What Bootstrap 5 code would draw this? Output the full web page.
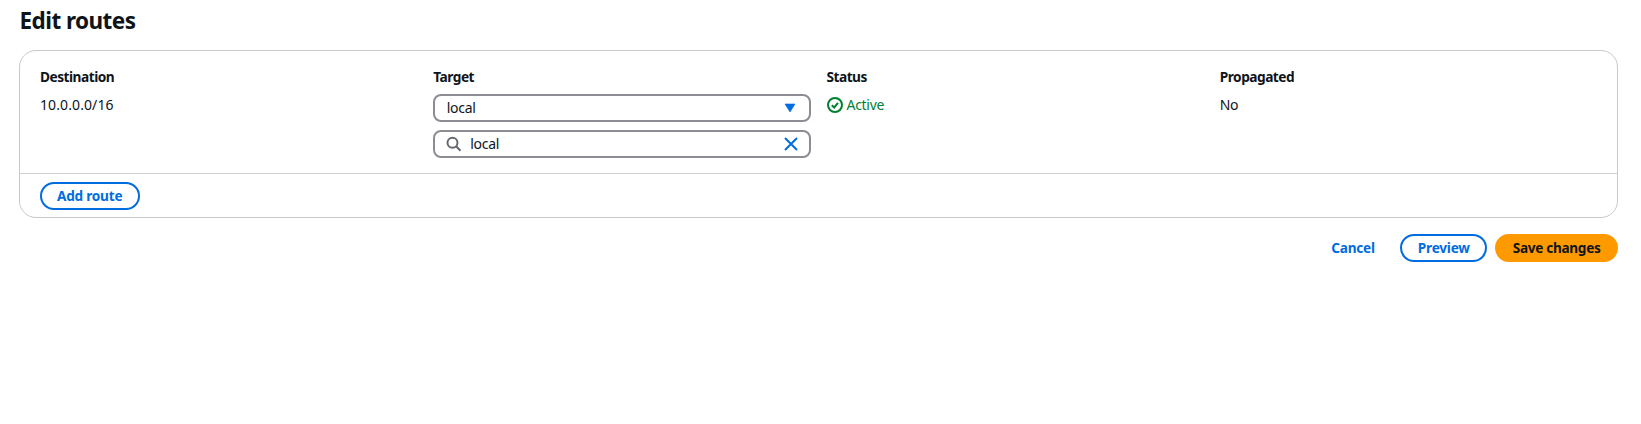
<!DOCTYPE html>
<html lang="en">
<head>
<meta charset="utf-8">
<meta name="viewport" content="width=device-width, initial-scale=1">
<title>Edit routes</title>
<link rel="stylesheet" href="https://cdn.jsdelivr.net/npm/bootstrap@5.3.0/dist/css/bootstrap.min.css">
<style>
  body { font-family: "Noto Sans", sans-serif; font-size: 14px; line-height: 20px; color: #0f141a; letter-spacing: -.3px; background: #fff; overflow: hidden; }
  main { padding: 8px 23px 0 19px; }
  h1 { font-size: 22.5px; line-height: 26px; font-weight: 700; letter-spacing: -.55px; margin: 0 0 16px; padding-left: .5px; }
  .route-card { border: 1px solid #c8c9cf; border-radius: 17px; height: 168px; }
  .route-body { height: 122px; padding: 16px 20px 0; }
  .route-grid { --bs-gutter-x: 16px; }
  .route-card .card-footer { border-top: 1px solid #d0d1d5; padding: 8px 19.5px; height: 44px; background: transparent; }
  .col-label { font-size: 13.7px; font-weight: 700; letter-spacing: -.5px; height: 28px; }
  .col-target .col-label { height: 27px; }
  .field { height: 28px; border: 2px solid #8c8c94; border-radius: 8px; padding: 0 10.5px; }
  .field-select { padding: 0 13px 0 11.5px; }
  .search-icon { margin-right: 8.5px; }
  .btn-route { font-size: 13.6px; line-height: 20px; font-weight: 700; height: 28px; padding: 2px 15.5px; border: 2px solid #006ce0; border-radius: 20px; color: #006ce0; letter-spacing: -.22px; white-space: nowrap; }
  .btn-plain { border-color: transparent; }
  .btn-save { background: #ff9900; border-color: #ff9900; color: #0f141a; letter-spacing: -.3px; }
  .cidr { letter-spacing: .1px; }
  .ok { color: #00802f; }
  svg { display: block; flex: none; }
</style>
</head>
<body>
<main>
  <h1>Edit routes</h1>
  <section class="card route-card">
    <div class="card-body route-body flex-grow-0">
      <div class="row route-grid">
        <div class="col-3"><div class="col-label"><span>Destination</span></div><div><span class="cidr">10.0.0.0/16</span></div></div>
        <div class="col-3 col-target">
          <div class="col-label"><span>Target</span></div>
          <div class="field field-select d-flex align-items-center justify-content-between">
            <span>local</span>
            <svg width="12" height="10" viewBox="0 0 12 10"><path d="M1 1h10L6 9z" fill="#006ce0" stroke="#006ce0" stroke-width=".6"/></svg>
          </div>
          <div class="field d-flex align-items-center mt-2">
            <svg class="search-icon" width="16" height="16" viewBox="0 0 16 16" fill="none" stroke="#656871" stroke-width="2"><circle cx="6.5" cy="6.7" r="5"/><path d="M10.1 10.3l4.4 4.4"/></svg>
            <span>local</span>
            <svg class="ms-auto" width="14" height="14" viewBox="0 0 14 14" stroke="#006ce0" stroke-width="2"><path d="M1 1l12 12M13 1L1 13"/></svg>
          </div>
        </div>
        <div class="col-3"><div class="col-label"><span>Status</span></div>
          <div class="ok d-flex align-items-center gap-1">
            <svg width="16" height="16" viewBox="0 0 16 16" fill="none" stroke="currentColor" stroke-width="2"><circle cx="8" cy="8" r="7"/><path d="M4.8 8.2l2.4 2.3 3.8-4.6"/></svg>
            <span>Active</span>
          </div>
        </div>
        <div class="col-3"><div class="col-label"><span>Propagated</span></div><div><span>No</span></div></div>
      </div>
    </div>
    <div class="card-footer"><button class="btn btn-route" type="button">Add route</button></div>
  </section>
  <div class="d-flex justify-content-end gap-2 mt-3">
    <button class="btn btn-route btn-plain" type="button">Cancel</button>
    <button class="btn btn-route" type="button">Preview</button>
    <button class="btn btn-route btn-save" type="button">Save changes</button>
  </div>
</main>
<script src="https://cdn.jsdelivr.net/npm/bootstrap@5.3.0/dist/js/bootstrap.bundle.min.js"></script>
</body>
</html>
